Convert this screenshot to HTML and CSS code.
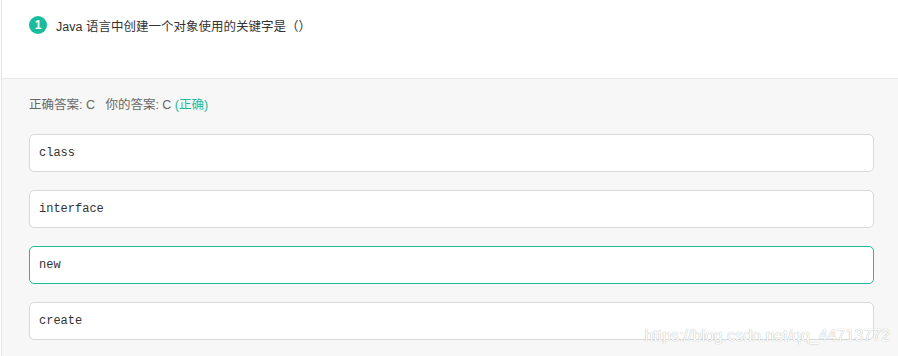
FILE: index.html
```html
<!DOCTYPE html>
<html lang="en">
<head>
  <meta charset="UTF-8" />
  <title>Question</title>
  <link rel="stylesheet" href="styles.css">
</head>
<body>
  <div class="question">
    <!-- Title -->
    <div class="question-head">
      <span class="num">1</span>
      <span class="title">Java 语言中创建一个对象使用的关键字是（）</span>
    </div>

    <!-- Answer + options -->
    <div class="question-body">
      <p class="result">正确答案: C &nbsp; 你的答案: C <span class="ok">(正确)</span></p>
      <div class="option">class</div>
      <div class="option">interface</div>
      <div class="option right">new</div>
      <div class="option">create</div>
    </div>

    <span class="watermark">https://blog.csdn.net/qq_44713772</span>
  </div>
</body>
</html>
```

FILE: styles.css
```css
body, html {
  margin: 0;
  padding: 0;
  font-family: "Liberation Sans", Arial, "Noto Sans CJK SC", sans-serif;
  background-color: #fff;
  color: #333;
}

.question {
  position: relative;
  margin-left: 1px;
  border-left: 1px solid #e3e3e3;
  height: 356px;
  background-color: #f7f7f7;
}

.question-head {
  display: flex;
  align-items: center;
  height: 50px;
  padding: 0 0 28px 27px;
  background-color: #fff;
  border-bottom: 1px solid #e8e8e8;
}

.num {
  display: inline-flex;
  align-items: center;
  justify-content: center;
  width: 18px;
  height: 18px;
  border-radius: 50%;
  background-color: #1abc9c;
  color: #fff;
  font-size: 12px;
  font-weight: bold;
  margin-right: 9px;
}

.title {
  font-size: 12.5px;
  color: #333;
}

.question-body {
  padding: 17px 24px 0 27px;
}

.result {
  margin: 0 0 20px;
  font-size: 12.5px;
  line-height: 18px;
  color: #666;
}

.ok {
  color: #1abc9c;
}

.option {
  height: 36px;
  line-height: 36px;
  margin-bottom: 18px;
  padding: 0 9px;
  background-color: #fff;
  border: 1px solid #d9d9d9;
  border-radius: 5px;
  font-family: "Liberation Mono", "Courier New", monospace;
  font-size: 12px;
  color: #333;
}

.option.right {
  border-color: #1abc9c;
}

.watermark {
  position: absolute;
  right: 8px;
  bottom: 11px;
  font-size: 16px;
  color: #fff;
  text-shadow: 0 0 1px #999;
}
```
